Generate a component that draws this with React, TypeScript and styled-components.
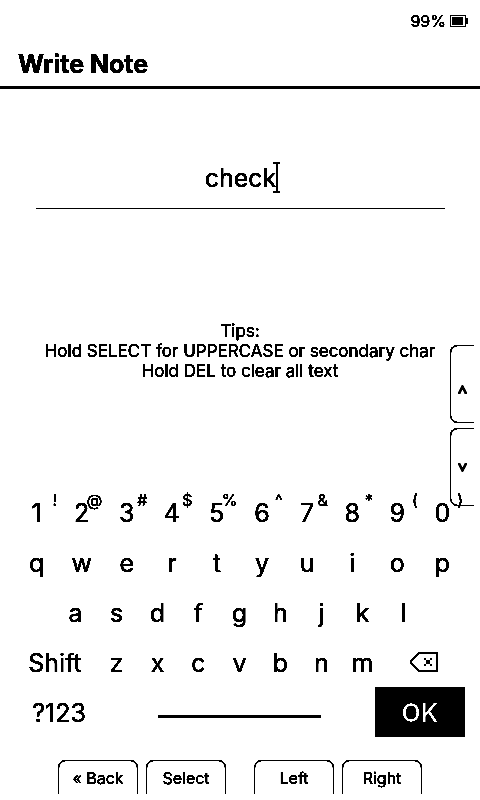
import React, { useState } from "react";
import styled, { createGlobalStyle } from "styled-components";

const GlobalStyle = createGlobalStyle`
  *, *::before, *::after { box-sizing: border-box; }
  body {
    margin: 0;
    background: #fff;
    color: #000;
    font-family: Inter, "Liberation Sans", sans-serif;
  }
  button, input {
    margin: 0;
    padding: 0;
    border: 0;
    border-radius: 0;
    background: none;
    color: inherit;
    font: inherit;
  }
`;

/* Darkening and then a hard contrast gives the one-bit look of an e-paper panel. */
const Screen = styled.main`
  position: relative;
  display: flex;
  flex-direction: column;
  min-height: 100vh;
  padding-bottom: 6px;
  background: #fff;
  filter: brightness(0.58) contrast(16);
`;

const StatusBar = styled.div`
  display: flex;
  justify-content: flex-end;
  align-items: center;
  gap: 4px;
  height: 42px;
  padding: 0 12px;
  font-size: 16px;
`;

const Header = styled.header`
  height: 47px;
  padding: 6px 18px 0;
  border-bottom: 3px solid #000;
`;

const Title = styled.h1`
  margin: 0;
  font-size: 25px;
  line-height: 32px;
  font-weight: 700;
`;

const Field = styled.label`
  display: flex;
  justify-content: center;
  margin: 69px 35px 0 36px;
  height: 51px;
  border-bottom: 1px solid #000;
`;

const FieldText = styled.span`
  position: relative;
  height: 40px;
`;

const NoteInput = styled.input`
  field-sizing: content;
  height: 40px;
  font-size: 25px;
  outline: none;
  caret-color: transparent;
`;

const Beam = styled.svg`
  position: absolute;
  left: calc(100% - 3px);
  top: 4px;
`;

const Tips = styled.p`
  margin: 112px 0 0;
  text-align: center;
  font-size: 17px;
  line-height: 20px;
`;

const Keyboard = styled.div`
  display: flex;
  flex-direction: column;
  margin: auto 15px 0 14px;
`;

const KeyRow = styled.div<{ $columns: number }>`
  display: grid;
  grid-template-columns: repeat(${(p) => p.$columns}, minmax(0, 1fr));
  height: 50px;
`;

const Key = styled.button<{ $span?: number; $start?: number; $active?: boolean }>`
  position: relative;
  display: flex;
  justify-content: center;
  align-items: center;
  grid-column: ${(p) => p.$start ?? "auto"} / span ${(p) => p.$span ?? 1};
  padding-top: 2px;
  background: ${(p) => (p.$active ? "#000" : "none")};
  color: ${(p) => (p.$active ? "#fff" : "#000")};
  font-size: 25px;
  font-weight: ${(p) => (p.$active ? 600 : 400)};
`;

const Secondary = styled.span`
  position: absolute;
  top: 3px;
  right: 2px;
  font-size: 16px;
  line-height: 20px;
`;

const SpaceBar = styled.span`
  width: 60%;
  height: 3px;
  margin-top: 6px;
  background: #000;
`;

const BottomNav = styled.nav`
  display: flex;
  justify-content: center;
  gap: 28px;
  margin-top: 23px;
`;

const NavPair = styled.div`
  display: flex;
  gap: 8px;
`;

const NavButton = styled.button`
  width: 80px;
  height: 34px;
  border: 1px solid #000;
  border-bottom: 0;
  border-radius: 8px 8px 0 0;
  font-size: 16px;
`;

const SideNav = styled.nav`
  position: absolute;
  right: 6px;
  top: 345px;
  display: flex;
  flex-direction: column;
  gap: 5px;
`;

const SideButton = styled.button<{ $drop?: number }>`
  display: flex;
  align-items: center;
  justify-content: center;
  width: 24px;
  height: 78px;
  padding-top: ${(p) => p.$drop ?? 0}px;
  border: 1px solid #000;
  border-right: 0;
  border-radius: 8px 0 0 8px;
`;

const DIGITS: [string, string][] = [
  ["1", "!"], ["2", "@"], ["3", "#"], ["4", "$"], ["5", "%"],
  ["6", "^"], ["7", "&"], ["8", "*"], ["9", "("], ["0", ")"],
];

export default function App() {
  const [note, setNote] = useState("check");
  const type = (c: string) => setNote((n) => n + c);

  return (
    <>
      <GlobalStyle />
      <Screen>
        <StatusBar>
          <span>99%</span>
          <svg width="18" height="12" shapeRendering="crispEdges" aria-label="Battery">
            <rect x="0.5" y="0.5" width="15" height="11" fill="none" stroke="#000" />
            <rect x="2" y="2" width="11" height="8" />
            <rect x="16" y="3" width="2" height="6" />
          </svg>
        </StatusBar>
        <Header>
          <Title>Write Note</Title>
        </Header>
        <Field>
          <FieldText>
            <NoteInput
              aria-label="Note"
              value={note}
              onChange={(e) => setNote(e.target.value)}
            />
            <Beam width="7" height="31" shapeRendering="crispEdges" aria-hidden="true">
              <path d="M0 0h7v2h-2v27h2v2h-7v-2h3v-27h-3z" />
            </Beam>
          </FieldText>
        </Field>
        <Tips>
          Tips:
          <br />
          Hold SELECT for UPPERCASE or secondary char
          <br />
          Hold DEL to clear all text
        </Tips>

        <Keyboard>
          <KeyRow $columns={10}>
            {DIGITS.map(([d, s]) => (
              <Key key={d} onClick={() => type(d)}>
                {d}
                <Secondary>{s}</Secondary>
              </Key>
            ))}
          </KeyRow>
          <KeyRow $columns={10}>
            {[..."qwertyuiop"].map((c) => (
              <Key key={c} onClick={() => type(c)}>{c}</Key>
            ))}
          </KeyRow>
          <KeyRow $columns={11}>
            {[..."asdfghjkl"].map((c, i) => (
              <Key key={c} $start={i + 2} onClick={() => type(c)}>{c}</Key>
            ))}
          </KeyRow>
          <KeyRow $columns={11}>
            <Key $span={2}>Shift</Key>
            {[..."zxcvbnm"].map((c) => (
              <Key key={c} onClick={() => type(c)}>{c}</Key>
            ))}
            <Key $span={2} aria-label="Delete" onClick={() => setNote((n) => n.slice(0, -1))}>
              <svg width="28" height="22" shapeRendering="crispEdges">
                <path d="M9 1H27V19H9L7 17L1 11V9L7 3Z" fill="none" stroke="#000" strokeWidth="2" />
                <path d="M14 6h2v2h-2zM20 6h2v2h-2zM16 8h4v4h-4zM14 12h2v2h-2zM20 12h2v2h-2z" />
              </svg>
            </Key>
          </KeyRow>
          <KeyRow $columns={5}>
            <Key>?123</Key>
            <Key $span={3} aria-label="Space" onClick={() => type(" ")}>
              <SpaceBar />
            </Key>
            <Key $active>OK</Key>
          </KeyRow>
        </Keyboard>

        <BottomNav aria-label="Hardware buttons">
          <NavPair>
            <NavButton>« Back</NavButton>
            <NavButton>Select</NavButton>
          </NavPair>
          <NavPair>
            <NavButton>Left</NavButton>
            <NavButton>Right</NavButton>
          </NavPair>
        </BottomNav>

        <SideNav aria-label="Side buttons">
          <SideButton aria-label="Up" $drop={10}>
            <svg width="9" height="9" fill="none" stroke="#000" strokeWidth="2">
              <path d="M1 8.5L4.5 1.5L8 8.5" />
            </svg>
          </SideButton>
          <SideButton aria-label="Down">
            <svg width="9" height="9" fill="none" stroke="#000" strokeWidth="2">
              <path d="M1 0.5L4.5 7.5L8 0.5" />
            </svg>
          </SideButton>
        </SideNav>
      </Screen>
    </>
  );
}
